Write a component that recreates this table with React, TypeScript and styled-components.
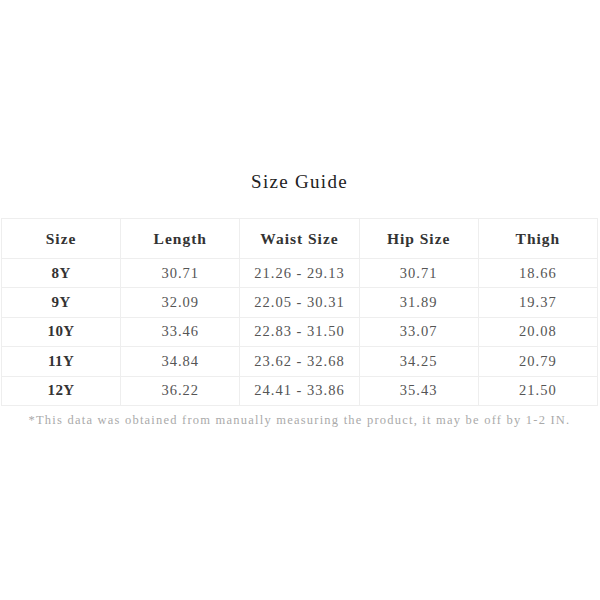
import { createGlobalStyle } from 'styled-components';
import styled from 'styled-components';

const GlobalStyle = createGlobalStyle`
  html, body {
    margin: 0;
    padding: 0;
    background: #ffffff;
  }
  body {
    font-family: 'Liberation Serif', 'DejaVu Serif', serif;
  }
`;

const Page = styled.div`
  width: 600px;
  height: 600px;
  padding: 170px 2px 0 1px;
  box-sizing: border-box;
`;

const Title = styled.h2`
  margin: 0 0 24px;
  height: 24px;
  line-height: 24px;
  text-align: center;
  font-size: 19px;
  font-weight: normal;
  letter-spacing: 1.3px;
  color: #222;
`;

const Table = styled.table`
  width: 100%;
  border-collapse: collapse;
  table-layout: fixed;
`;

const HeadCell = styled.th`
  height: 39px;
  padding: 0;
  border: 1px solid #eeeeee;
  font-size: 15.5px;
  font-weight: bold;
  letter-spacing: 1px;
  color: #333;
  text-align: center;
`;

const Cell = styled.td<{ $label?: boolean }>`
  height: 28.4px;
  padding: 0;
  border: 1px solid #eeeeee;
  text-align: center;
  font-size: ${({ $label }) => ($label ? '15px' : '14.5px')};
  letter-spacing: ${({ $label }) => ($label ? '0.4px' : '1px')};
  font-weight: ${({ $label }) => ($label ? 'bold' : 'normal')};
  color: ${({ $label }) => ($label ? '#333' : '#555')};
`;

const Note = styled.p`
  margin: 6px 0 0;
  line-height: 16px;
  text-align: center;
  font-size: 12.5px;
  letter-spacing: 1.22px;
  white-space: nowrap;
  color: #aaaaaa;
`;

const headers = ['Size', 'Length', 'Waist Size', 'Hip Size', 'Thigh'];

const rows = [
  ['8Y', '30.71', '21.26 - 29.13', '30.71', '18.66'],
  ['9Y', '32.09', '22.05 - 30.31', '31.89', '19.37'],
  ['10Y', '33.46', '22.83 - 31.50', '33.07', '20.08'],
  ['11Y', '34.84', '23.62 - 32.68', '34.25', '20.79'],
  ['12Y', '36.22', '24.41 - 33.86', '35.43', '21.50'],
];

export default function App() {
  return (
    <>
      <GlobalStyle />
      <Page>
        <Title>Size Guide</Title>
        <Table>
          <thead>
            <tr>
              {headers.map((h) => (
                <HeadCell key={h}>{h}</HeadCell>
              ))}
            </tr>
          </thead>
          <tbody>
            {rows.map((row) => (
              <tr key={row[0]}>
                {row.map((value, i) => (
                  <Cell key={i} $label={i === 0}>
                    {value}
                  </Cell>
                ))}
              </tr>
            ))}
          </tbody>
        </Table>
        <Note>
          *This data was obtained from manually measuring the product, it may be off by 1-2 IN.
        </Note>
      </Page>
    </>
  );
}
